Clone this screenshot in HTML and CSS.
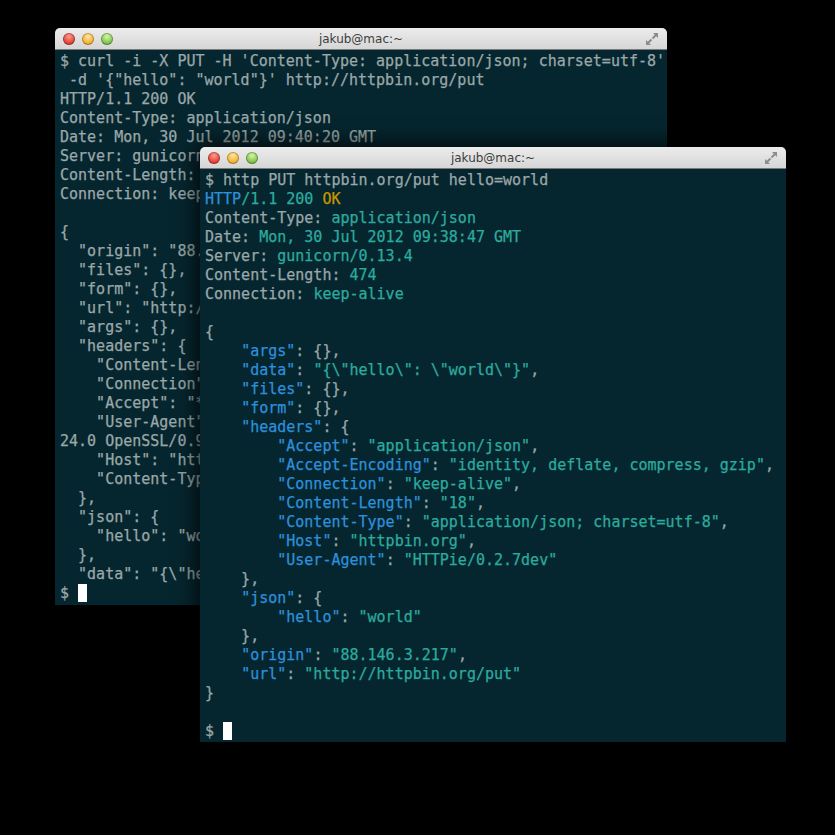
FILE: index.html
```html
<!DOCTYPE html>
<html lang="en">
<head>
  <meta charset="UTF-8">
  <title>HTTPie vs curl</title>
  <link rel="stylesheet" href="styles.css">
</head>
<body>

<div class="desktop">

  <section class="window back">
    <div class="titlebar">
      <span class="light red"></span><span class="light yellow"></span><span class="light green"></span>
      <span class="title">jakub@mac:~</span>
      <svg class="resize" width="14" height="14" viewBox="0 0 14 14">
        <path d="M8 1h5v5l-1.8-1.8-3 3-1.4-1.4 3-3z M6 13H1V8l1.8 1.8 3-3 1.4 1.4-3 3z" fill="#8c8c8c"/>
      </svg>
    </div>
<pre class="screen">$ curl -i -X PUT -H 'Content-Type: application/json; charset=utf-8'
 -d '{"hello": "world"}' http://httpbin.org/put
HTTP/1.1 200 OK
Content-Type: application/json
Date: Mon, 30 Jul 2012 09:40:20 GMT
Server: gunicorn/0.13.4
Content-Length: 488
Connection: keep-alive

{
  "origin": "88.146.3.217",
  "files": {},
  "form": {},
  "url": "http://httpbin.org/put",
  "args": {},
  "headers": {
    "Content-Length": "18",
    "Connection": "keep-alive",
    "Accept": "*/*",
    "User-Agent": "curl/7.24.0 (x86_64-apple-darwin12.0) libcurl/7.
24.0 OpenSSL/0.9.8r zlib/1.2.5",
    "Host": "httpbin.org",
    "Content-Type": "application/json; charset=utf-8"
  },
  "json": {
    "hello": "world"
  },
  "data": "{\"hello\": \"world\"}"
$ <span class="cursor"></span></pre>
  </section>

  <section class="window front">
    <div class="titlebar">
      <span class="light red"></span><span class="light yellow"></span><span class="light green"></span>
      <span class="title">jakub@mac:~</span>
      <svg class="resize" width="14" height="14" viewBox="0 0 14 14">
        <path d="M8 1h5v5l-1.8-1.8-3 3-1.4-1.4 3-3z M6 13H1V8l1.8 1.8 3-3 1.4 1.4-3 3z" fill="#8c8c8c"/>
      </svg>
    </div>
<pre class="screen">$ http PUT httpbin.org/put hello=world
<span class="k">HTTP</span><span class="s">/1.1 200</span> <span class="y">OK</span>
Content-Type: <span class="s">application/json</span>
Date: <span class="s">Mon, 30 Jul 2012 09:38:47 GMT</span>
Server: <span class="s">gunicorn/0.13.4</span>
Content-Length: <span class="s">474</span>
Connection: <span class="s">keep-alive</span>

{
    <span class="k">"args"</span>: {},
    <span class="k">"data"</span>: <span class="s">"{\"hello\": \"world\"}"</span>,
    <span class="k">"files"</span>: {},
    <span class="k">"form"</span>: {},
    <span class="k">"headers"</span>: {
        <span class="k">"Accept"</span>: <span class="s">"application/json"</span>,
        <span class="k">"Accept-Encoding"</span>: <span class="s">"identity, deflate, compress, gzip"</span>,
        <span class="k">"Connection"</span>: <span class="s">"keep-alive"</span>,
        <span class="k">"Content-Length"</span>: <span class="s">"18"</span>,
        <span class="k">"Content-Type"</span>: <span class="s">"application/json; charset=utf-8"</span>,
        <span class="k">"Host"</span>: <span class="s">"httpbin.org"</span>,
        <span class="k">"User-Agent"</span>: <span class="s">"HTTPie/0.2.7dev"</span>
    },
    <span class="k">"json"</span>: {
        <span class="k">"hello"</span>: <span class="s">"world"</span>
    },
    <span class="k">"origin"</span>: <span class="s">"88.146.3.217"</span>,
    <span class="k">"url"</span>: <span class="s">"http://httpbin.org/put"</span>
}

$ <span class="cursor"></span></pre>
  </section>

</div>

</body>
</html>
```

FILE: styles.css
```css
body {
  margin: 0;
  padding: 0;
  background-color: #000;
}
.desktop {
  position: relative;
  width: 835px;
  height: 835px;
  overflow: hidden;
  background-color: #000;
}
.window {
  position: absolute;
  display: flex;
  flex-direction: column;
  background-color: #06262f;
  border-radius: 5px 5px 0 0;
  overflow: hidden;
}
.back {
  left: 55px;
  top: 28px;
  width: 612px;
  height: 577px;
}
.front {
  left: 200px;
  top: 147px;
  width: 586px;
  height: 595px;
  box-shadow: 0 0 22px 4px rgba(0, 0, 0, 0.75);
}
.titlebar {
  position: relative;
  flex: none;
  height: 22px;
  display: flex;
  align-items: center;
  padding: 0 8px;
  gap: 7px;
  background: linear-gradient(#ececec, #d6d6d6);
  border-bottom: 1px solid #7a7a7a;
  box-sizing: border-box;
}
.light {
  width: 12px;
  height: 12px;
  border-radius: 50%;
  box-shadow: inset 0 0 0 1px rgba(0, 0, 0, 0.25);
}
.red {
  background: radial-gradient(circle at 50% 30%, #ff9a8f, #e2463b 60%, #b8281e);
}
.yellow {
  background: radial-gradient(circle at 50% 30%, #ffe6a0, #f2b43a 60%, #c98a16);
}
.green {
  background: radial-gradient(circle at 50% 30%, #d8f5a6, #82c654 60%, #4e9a2c);
}
.title {
  position: absolute;
  left: 0;
  right: 0;
  text-align: center;
  font-family: "DejaVu Sans", sans-serif;
  font-size: 12px;
  color: #3d3d3d;
  pointer-events: none;
}
.resize {
  margin-left: auto;
}
.screen {
  flex: 1;
  margin: 0;
  padding: 2px 5px 0;
  font-family: "DejaVu Sans Mono", monospace;
  font-size: 15px;
  line-height: 19px;
  color: #9aa8a9;
  -webkit-text-stroke: 0.25px;
  white-space: pre;
  overflow: hidden;
}
.k {
  color: #2d90dc;
}
.s {
  color: #2cab9f;
}
.y {
  color: #c69800;
}
.cursor {
  display: inline-block;
  width: 9px;
  height: 18px;
  vertical-align: -4px;
  background-color: #fff;
}
```
